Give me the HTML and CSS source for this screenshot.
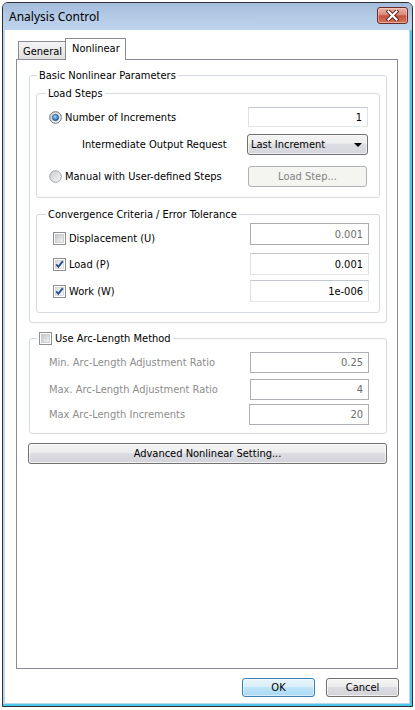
FILE: index.html
```html
<!DOCTYPE html>
<html>
<head>
<meta charset="utf-8">
<title>Analysis Control</title>
<link rel="stylesheet" href="styles.css">
</head>
<body>
<div class="window">
  <div class="titlebar">
    <span class="title">Analysis Control</span>
    <span class="close">
      <svg width="13" height="11" viewBox="0 0 13 11">
        <path d="M2.5 1.5 L10.5 9.5 M10.5 1.5 L2.5 9.5" stroke="#5a1d16" stroke-width="4" stroke-linecap="square"/>
        <path d="M2.5 1.5 L10.5 9.5 M10.5 1.5 L2.5 9.5" stroke="#fff" stroke-width="2.2" stroke-linecap="square"/>
      </svg>
    </span>
  </div>

  <div class="client">
    <div class="tabs">
      <span class="tab-gap"></span>
      <span class="tab">General</span>
      <span class="tab active">Nonlinear</span>
      <span class="tab-fill"></span>
    </div>

    <div class="panel">
      <fieldset class="group basic">
        <legend>Basic Nonlinear Parameters</legend>
        <div class="basic-body">

          <fieldset class="group steps">
            <legend>Load Steps</legend>
            <div class="steps-body">
              <div class="row s1">
                <label class="opt">
                  <svg class="radio" width="13" height="13" viewBox="0 0 13 13">
                    <defs>
                      <linearGradient id="rbg" x1="0" y1="0" x2="1" y2="1">
                        <stop offset="0" stop-color="#cfd1d4"/>
                        <stop offset="1" stop-color="#fbfbfb"/>
                      </linearGradient>
                      <radialGradient id="rdot" cx="0.4" cy="0.35" r="0.7">
                        <stop offset="0" stop-color="#9ad6ff"/>
                        <stop offset="1" stop-color="#1b5cae"/>
                      </radialGradient>
                    </defs>
                    <circle cx="6.5" cy="6.5" r="5.8" fill="url(#rbg)" stroke="#5d6167" stroke-width="0.9"/>
                    <circle cx="6.5" cy="6.5" r="3.1" fill="url(#rdot)" stroke="#1d3c6b" stroke-width="0.7"/>
                  </svg>
                  Number of Increments
                </label>
                <span class="field">1</span>
              </div>
              <div class="row s2">
                <span class="indent">Intermediate Output Request</span>
                <span class="select">Last Increment<i class="caret"></i></span>
              </div>
              <div class="row s3">
                <label class="opt">
                  <svg class="radio" width="13" height="13" viewBox="0 0 13 13">
                    <defs>
                      <linearGradient id="rbg2" x1="0" y1="0" x2="1" y2="1">
                        <stop offset="0" stop-color="#c9cbce"/>
                        <stop offset="1" stop-color="#f7f7f7"/>
                      </linearGradient>
                    </defs>
                    <circle cx="6.5" cy="6.5" r="5.8" fill="url(#rbg2)" stroke="#9a9ea3" stroke-width="0.9"/>
                  </svg>
                  Manual with User-defined Steps
                </label>
                <span class="btn disabled load">Load Step...</span>
              </div>
            </div>
          </fieldset>

          <fieldset class="group conv">
            <legend>Convergence Criteria / Error Tolerance</legend>
            <div class="conv-body">
              <div class="row c1">
                <label class="opt low">
                  <svg class="check" width="13" height="13" viewBox="0 0 13 13">
                    <defs>
                      <linearGradient id="cbu" x1="0" y1="0" x2="1" y2="1">
                        <stop offset="0" stop-color="#c4c6c9"/>
                        <stop offset="1" stop-color="#f3f3f3"/>
                      </linearGradient>
                    </defs>
                    <rect x="0.5" y="0.5" width="12" height="12" fill="#fff" stroke="#8e8f91"/>
                    <rect x="2.5" y="2.5" width="8" height="8" fill="url(#cbu)" stroke="#b4b6b9" stroke-width="0.6"/>
                  </svg>
                  Displacement (U)
                </label>
                <span class="field dim">0.001</span>
              </div>
              <div class="row c2">
                <label class="opt">
                  <svg class="check" width="13" height="13" viewBox="0 0 13 13">
                    <defs>
                      <linearGradient id="cbc" x1="0" y1="0" x2="1" y2="1">
                        <stop offset="0" stop-color="#d7d9dc"/>
                        <stop offset="1" stop-color="#fcfcfc"/>
                      </linearGradient>
                    </defs>
                    <rect x="0.5" y="0.5" width="12" height="12" fill="#fff" stroke="#8e8f91"/>
                    <rect x="2.5" y="2.5" width="8" height="8" fill="url(#cbc)" stroke="#c4c6c9" stroke-width="0.6"/>
                    <path d="M3.2 6.4 L5.4 8.8 L9.8 3.2" fill="none" stroke="#2c4f94" stroke-width="1.9"/>
                  </svg>
                  Load (P)
                </label>
                <span class="field">0.001</span>
              </div>
              <div class="row c3">
                <label class="opt">
                  <svg class="check" width="13" height="13" viewBox="0 0 13 13">
                    <rect x="0.5" y="0.5" width="12" height="12" fill="#fff" stroke="#8e8f91"/>
                    <rect x="2.5" y="2.5" width="8" height="8" fill="url(#cbc)" stroke="#c4c6c9" stroke-width="0.6"/>
                    <path d="M3.2 6.4 L5.4 8.8 L9.8 3.2" fill="none" stroke="#2c4f94" stroke-width="1.9"/>
                  </svg>
                  Work (W)
                </label>
                <span class="field">1e-006</span>
              </div>
            </div>
          </fieldset>

        </div>
      </fieldset>

      <fieldset class="group arc">
        <legend>
          <label class="opt">
            <svg class="check" width="13" height="13" viewBox="0 0 13 13">
              <rect x="0.5" y="0.5" width="12" height="12" fill="#fff" stroke="#8e8f91"/>
              <rect x="2.5" y="2.5" width="8" height="8" fill="url(#cbu)" stroke="#b4b6b9" stroke-width="0.6"/>
            </svg>
            Use Arc-Length Method
          </label>
        </legend>
        <div class="arc-body">
          <div class="row a1">
            <span class="muted">Min. Arc-Length Adjustment Ratio</span>
            <span class="field off">0.25</span>
          </div>
          <div class="row a2">
            <span class="muted">Max. Arc-Length Adjustment Ratio</span>
            <span class="field off">4</span>
          </div>
          <div class="row a3">
            <span class="muted">Max Arc-Length Increments</span>
            <span class="field off wide">20</span>
          </div>
        </div>
      </fieldset>

      <span class="btn advanced">Advanced Nonlinear Setting...</span>
    </div>

    <div class="actions">
      <span class="btn default">OK</span>
      <span class="btn">Cancel</span>
    </div>
  </div>
</div>
</body>
</html>
```

FILE: styles.css
```css
* {
  box-sizing: border-box;
}

body {
  margin: 0;
  background: #fff;
  color: #000;
  font-family: "DejaVu Sans Condensed", "DejaVu Sans", sans-serif;
  font-stretch: condensed;
  font-size: 11px;
  line-height: 13px;
}

/* window frame */
.window {
  margin: 2px 0 0 2px;
  width: 411px;
  height: 705px;
  border: 1px solid #2f3034;
  border-radius: 6px 6px 0 0;
  background: #bcd6ef;
  box-shadow: inset -2px -2px 0 #4fc5e9;
  padding: 0 3px 3px 2px;
  display: flex;
  flex-direction: column;
}

.titlebar {
  height: 27px;
  margin: 0 -3px 0 -2px;
  border-radius: 5px 5px 0 0;
  background: linear-gradient(#a3bcdc, #b5cce7 55%, #bfd5ed);
  display: flex;
  align-items: flex-start;
  justify-content: space-between;
  padding: 0 4px 0 6px;
}

.title {
  font-family: "Noto Sans", "Open Sans", sans-serif;
  font-stretch: normal;
  font-size: 12px;
  line-height: 16px;
  margin-top: 6px;
  color: #000;
}

.close {
  margin-top: 4px;
  width: 31px;
  height: 17px;
  border: 1px solid #6a2b24;
  border-radius: 3px;
  background: linear-gradient(#eab2a6, #d98b7a 45%, #c2513d 52%, #d4775c);
  box-shadow: inset 0 0 0 1px rgba(255, 220, 210, 0.5);
  display: flex;
  align-items: center;
  justify-content: center;
}

.client {
  flex: 1;
  background: #fff;
  padding: 8px 11px 6px 11px;
  display: flex;
  flex-direction: column;
}

/* tab strip */
.tabs {
  display: flex;
  align-items: flex-end;
  height: 22px;
}

.tab-gap {
  width: 2px;
  height: 1px;
  background: #898c95;
}

.tab {
  height: 19px;
  width: 47px;
  border: 1px solid #898c95;
  border-right: none;
  background: linear-gradient(#f3f3f3, #ebebeb 50%, #dedede);
  padding: 3px 0 0 4px;
}

.tab.active {
  height: 22px;
  width: 61px;
  border-right: 1px solid #898c95;
  border-bottom: none;
  background: #fff;
  padding: 3px 0 0 6px;
}

.tab-fill {
  flex: 1;
  height: 1px;
  background: #898c95;
}

.panel {
  flex: 1;
  border: 1px solid #898c95;
  border-top: none;
  padding: 9px 10px 0 12px;
  display: flex;
  flex-direction: column;
  align-items: stretch;
}

/* group boxes */
fieldset.group {
  margin: 0;
  padding: 0;
  min-width: 0;
  border: 1px solid #d5dbe0;
  border-radius: 3px;
}

fieldset.group > legend {
  padding: 0 2px;
  margin-left: 7px;
  line-height: 13px;
}

fieldset.steps > legend,
fieldset.conv > legend {
  margin-left: 9px;
}

.basic-body {
  padding: 5px 6px 9px 6px;
}

.steps-body {
  padding: 0 11px 10px 12px;
}

fieldset.conv {
  margin-top: 10px;
}

.conv-body {
  padding: 0 10px 10px 16px;
}

fieldset.arc {
  margin-top: 9px;
}

.arc-body {
  padding: 0 17px 8px 19px;
}

/* rows */
.row {
  display: flex;
  align-items: center;
  justify-content: space-between;
}

.s1 { margin-top: 7px; height: 20px; }
.s2 { margin-top: 7px; height: 21px; }
.s3 { margin-top: 11px; height: 21px; }

.c1 { margin-top: 2px; height: 22px; }
.c2 { margin-top: 8px; height: 22px; }
.c3 { margin-top: 5px; height: 22px; }

.a1 { margin-top: 7px; height: 21px; }
.a2 { margin-top: 6px; height: 21px; }
.a3 { margin-top: 4px; height: 21px; }

.opt {
  display: flex;
  align-items: center;
  gap: 3px;
}

/* the first check box sits a little below its text box */
.opt.low {
  margin-top: 8px;
}

.opt svg {
  flex: none;
  display: block;
}

.indent {
  padding-left: 33px;
}

.muted {
  color: #8d8d8d;
}

/* text boxes */
.field {
  height: 100%;
  width: 119px;
  border: 1px solid;
  border-color: #c3c8ce #dde1e6 #e2e6ea #dde1e6;
  background: #fff;
  text-align: right;
  padding-right: 5px;
  display: flex;
  align-items: center;
  justify-content: flex-end;
}

.s1 .field {
  width: 120px;
}

.field.dim {
  border-color: #a9abae;
  color: #6d6d6d;
}

.field.off {
  border-color: #aeb0b3;
  color: #6d6d6d;
}

.field.wide {
  width: 120px;
}

/* drop-down */
.select {
  height: 100%;
  width: 121px;
  border: 1px solid #707070;
  border-radius: 3px;
  background: linear-gradient(#f3f3f3, #ededed 42%, #dcdde2 50%, #d5d6dc);
  box-shadow: inset 0 0 0 1px rgba(255, 255, 255, 0.6);
  display: flex;
  align-items: center;
  justify-content: space-between;
  padding: 0 5px 0 3px;
}

.caret {
  width: 0;
  height: 0;
  border-left: 4px solid transparent;
  border-right: 4px solid transparent;
  border-top: 4px solid #000;
}

/* push buttons */
.btn {
  border: 1px solid #707070;
  border-radius: 3px;
  background: linear-gradient(#f5f5f5, #ececec 45%, #dcdce2 50%, #d3d3da);
  box-shadow: inset 0 0 0 1px rgba(255, 255, 255, 0.7);
  display: flex;
  align-items: center;
  justify-content: center;
}

.btn.disabled {
  background: #f4f4f0;
  border-color: #adb2b5;
  box-shadow: none;
  color: #838383;
}

.load {
  height: 100%;
  width: 119px;
  margin-right: 1px;
}

.advanced {
  margin: 9px 0 0 -1px;
  height: 21px;
}

.actions {
  margin: 9px -1px 0 0;
  display: flex;
  justify-content: flex-end;
  gap: 11px;
}

.actions .btn {
  width: 73px;
  height: 19px;
}

.btn.default {
  border-color: #3c7fb1;
  background: linear-gradient(#e8f5fc, #d9effa 45%, #bfe4f7 50%, #a9d8f2);
  box-shadow: inset 0 0 0 1px rgba(255, 255, 255, 0.5);
}
```
